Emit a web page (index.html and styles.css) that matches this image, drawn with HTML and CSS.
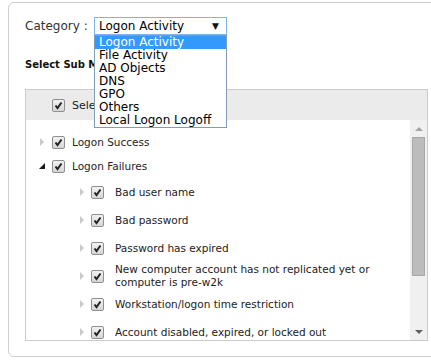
FILE: index.html
```html
<!DOCTYPE html>
<html lang="en">
<head>
    <meta charset="UTF-8">
    <title>Category</title>
    <link rel="stylesheet" href="styles.css">
</head>
<body>
    <div class="panel">
        <div class="category-row">
            <span class="category-label">Category :</span>
            <div class="select">
                <span class="select-value">Logon Activity</span>
                <span class="select-arrow">&#9660;</span>
                <ul class="select-list">
                    <li class="active">Logon Activity</li>
                    <li>File Activity</li>
                    <li>AD Objects</li>
                    <li>DNS</li>
                    <li>GPO</li>
                    <li>Others</li>
                    <li>Local Logon Logoff</li>
                </ul>
            </div>
        </div>

        <div class="sub-title">Select Sub Modules</div>

        <div class="tree-box">
            <div class="tree-head">
                <span class="cb"></span>
                <span class="head-text">Select All</span>
            </div>
            <div class="tree-body">
                <ul class="tree">
                    <li class="node top">
                        <span class="toggle closed"></span><span class="cb"></span><span class="label">Logon Success</span>
                    </li>
                    <li class="node top">
                        <span class="toggle open"></span><span class="cb"></span><span class="label">Logon Failures</span>
                    </li>
                    <li>
                        <ul class="children">
                            <li class="node child"><span class="toggle closed"></span><span class="cb"></span><span class="label">Bad user name</span></li>
                            <li class="node child"><span class="toggle closed"></span><span class="cb"></span><span class="label">Bad password</span></li>
                            <li class="node child"><span class="toggle closed"></span><span class="cb"></span><span class="label">Password has expired</span></li>
                            <li class="node child"><span class="toggle closed"></span><span class="cb"></span><span class="label">New computer account has not replicated yet or<br>computer is pre-w2k</span></li>
                            <li class="node child"><span class="toggle closed"></span><span class="cb"></span><span class="label">Workstation/logon time restriction</span></li>
                            <li class="node child"><span class="toggle closed"></span><span class="cb"></span><span class="label">Account disabled, expired, or locked out</span></li>
                        </ul>
                    </li>
                </ul>
                <div class="scrollbar">
                    <div class="scroll-btn up"></div>
                    <div class="scroll-track"><div class="scroll-thumb"></div></div>
                    <div class="scroll-btn down"></div>
                </div>
            </div>
        </div>
    </div>
</body>
</html>
```

FILE: styles.css
```css
      body {
          margin: 0;
          font-family: 'DejaVu Sans', Verdana, sans-serif;
          color: #222222;
          background: #ffffff;
          overflow: hidden;
          height: 362px;
      }
      ul {
          list-style: none;
          margin: 0;
          padding: 0;
      }
      .panel {
          margin: 2px 0 0 8px;
          width: 440px;
          height: 355px;
          border: 1px solid #cfcfcf;
          border-radius: 6px;
          padding: 14px 0 0 16px;
          box-sizing: border-box;
      }
      .category-row {
          display: flex;
          align-items: center;
          height: 18px;
      }
      .category-label {
          font-size: 12px;
          color: #333333;
          width: 69px;
      }
      .select {
          position: relative;
          width: 133px;
          height: 18px;
          box-sizing: border-box;
          border: 1px solid #7eb4ea;
          display: flex;
          align-items: center;
          padding: 0 0 0 4px;
          font-size: 12px;
          color: #000000;
      }
      .select-value {
          flex: 1;
      }
      .select-arrow {
          font-size: 9px;
          width: 14px;
          color: #111111;
      }
      .select-list {
          position: absolute;
          left: -1px;
          top: 17px;
          width: 133px;
          box-sizing: border-box;
          border: 1px solid #7f9db9;
          background: #ffffff;
          z-index: 5;
      }
      .select-list li {
          height: 13px;
          line-height: 13px;
          padding-left: 4px;
          font-size: 12px;
          white-space: nowrap;
      }
      .select-list li.active {
          background: #3399ff;
          color: #ffffff;
      }
      .sub-title {
          margin-top: 23px;
          font-size: 10px;
          font-weight: bold;
          line-height: 13px;
          color: #111111;
      }
      .tree-box {
          margin-top: 18px;
          width: 403px;
          height: 252px;
          box-sizing: border-box;
          border: 1px solid #cccccc;
          display: flex;
          flex-direction: column;
      }
      .tree-head {
          height: 30px;
          background: #ebebeb;
          display: flex;
          align-items: center;
          padding-left: 26px;
      }
      .head-text {
          margin-left: 7px;
          font-size: 11px;
      }
      .tree-body {
          flex: 1;
          display: flex;
          overflow: hidden;
          background: #ffffff;
      }
      .tree {
          flex: 1;
          padding-top: 10px;
          font-size: 10.5px;
      }
      .node {
          display: flex;
          align-items: center;
      }
      .node.top {
          height: 24px;
          padding-left: 11px;
      }
      .node.child {
          height: 28px;
          padding-left: 51px;
      }
      .toggle {
          width: 10px;
          height: 10px;
          display: flex;
          align-items: center;
          justify-content: center;
          margin-right: 5px;
      }
      .node.child .toggle {
          margin-right: 4px;
      }
      .toggle.closed::before {
          content: '';
          border-left: 4px solid #c9c9c9;
          border-top: 4px solid transparent;
          border-bottom: 4px solid transparent;
      }
      .toggle.open::before {
          content: '';
          border-bottom: 6px solid #1a1a1a;
          border-left: 6px solid transparent;
      }
      .cb {
          width: 13px;
          height: 13px;
          box-sizing: border-box;
          border: 1px solid #8f8f8f;
          border-radius: 2px;
          flex-shrink: 0;
          background-image: url("data:image/svg+xml;utf8,<svg xmlns='http://www.w3.org/2000/svg' width='11' height='11'><path d='M2.5 5.5 L4.5 8 L8.5 2.5' fill='none' stroke='%23222' stroke-width='2'/></svg>"), linear-gradient(#f2f2f2, #d6d6d6);
      }
      .label {
          margin-left: 7px;
          line-height: 13px;
      }
      .node.child .label {
          margin-left: 11px;
      }
      .scrollbar {
          width: 17px;
          background: #f0f0f0;
          display: flex;
          flex-direction: column;
      }
      .scroll-btn {
          height: 17px;
          display: flex;
          align-items: center;
          justify-content: center;
      }
      .scroll-btn.up::before {
          content: '';
          border-bottom: 4px solid #a3a3a3;
          border-left: 4px solid transparent;
          border-right: 4px solid transparent;
      }
      .scroll-btn.down::before {
          content: '';
          border-top: 4px solid #606060;
          border-left: 4px solid transparent;
          border-right: 4px solid transparent;
      }
      .scroll-track {
          flex: 1;
          padding: 0 2px;
      }
      .scroll-thumb {
          height: 139px;
          box-sizing: border-box;
          background: #bcbcbc;
          border: 1px solid #a8a8a8;
      }
```
